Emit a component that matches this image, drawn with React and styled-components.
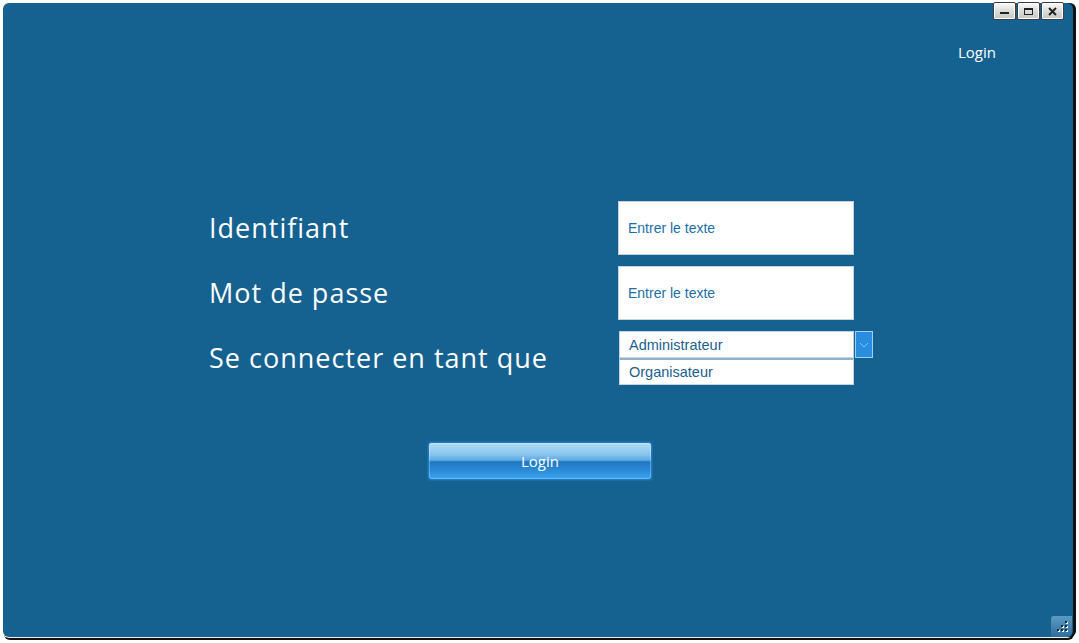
import React from 'react'
import styled, { createGlobalStyle } from 'styled-components'

const Global = createGlobalStyle`
  html, body {
    margin: 0;
    background: #ffffff;
    font-family: "Open Sans", "Noto Sans", sans-serif;
  }
`

const Page = styled.div`
  width: 1079px;
  height: 643px;
  padding: 3px 0 0 3px;
  box-sizing: border-box;
`

const Window = styled.section`
  position: relative;
  width: 1070px;
  height: 634px;
  background: #156190;
  border-radius: 6px;
  box-shadow: 3px 0 0 #111, 0 1px 0 #f2f2f2, 1px 3px 0 #111;
  display: flex;
  flex-direction: column;
  box-sizing: border-box;
  padding: 39px 77px 0 206px;
`

const Controls = styled.div`
  position: absolute;
  top: -1px;
  right: 9px;
  display: flex;
  gap: 1px;
`

const CtrlButton = styled.button`
  width: 23px;
  height: 18px;
  padding: 0;
  border: 1px solid #3d3d3d;
  border-radius: 2px;
  background: linear-gradient(#fafafa, #d9d9d9 55%, #c6c6c6);
  display: flex;
  align-items: center;
  justify-content: center;
  box-shadow: inset 0 0 0 1px #ffffff;
`

const Header = styled.header`
  display: flex;
  justify-content: flex-end;
`

const HeaderLink = styled.span`
  color: #ffffff;
  font-size: 15px;
  line-height: 20px;
`

const Form = styled.div`
  margin-top: 139px;
  display: grid;
  grid-template-columns: 409px 236px;
  grid-auto-rows: 54px;
  row-gap: 11px;
  align-items: center;
`

const Label = styled.div`
  color: #ffffff;
  font-size: 27px;
  line-height: 34px;
  letter-spacing: 1px;
`

const TextBox = styled.div`
  height: 54px;
  background: #ffffff;
  border: 1px solid #c3d3e0;
  box-sizing: border-box;
  display: flex;
  align-items: center;
  padding-left: 9px;
  color: #1c6ea6;
  font-family: "Liberation Sans", Arial, sans-serif;
  font-size: 14px;
`

const Combo = styled.div`
  position: relative;
  align-self: stretch;
  display: flex;
  flex-direction: column;
  margin-left: 1px;
  width: 235px;
`

const ComboRow = styled.div`
  height: 27px;
  background: #ffffff;
  box-sizing: border-box;
  border: 1px solid #c3d3e0;
  border-top: ${p => (p.$selected ? '1px solid #c3d3e0' : '2px solid #8fb2cc')};
  display: flex;
  align-items: center;
  padding-left: 9px;
  color: #1b5f8e;
  font-family: "Liberation Sans", Arial, sans-serif;
  font-size: 14.5px;
`

const ComboArrow = styled.div`
  position: absolute;
  top: 0;
  left: 236px;
  width: 18px;
  height: 27px;
  box-sizing: border-box;
  border: 1px solid #9fd0f5;
  background: #2a8ee0;
  display: flex;
  align-items: center;
  justify-content: center;
`

const ButtonRow = styled.div`
  margin-top: 57px;
  display: flex;
  padding-left: 219px;
`

const LoginButton = styled.button`
  width: 224px;
  height: 38px;
  border-radius: 3px;
  border: 1px solid #1c7ac0;
  box-shadow: 0 0 0 1px #1d6ea8, inset 0 0 0 1px rgba(255, 255, 255, 0.25);
  background: linear-gradient(
    #b3dbf7 0%,
    #8cc6f0 30%,
    #5aa9e5 48%,
    #1f78c0 52%,
    #2a8ad6 75%,
    #3aa3f0 100%
  );
  color: #ffffff;
  font-family: "Open Sans", "Noto Sans", sans-serif;
  font-size: 15px;
  padding: 0;
`

const Grip = styled.div`
  position: absolute;
  right: 1px;
  bottom: 0;
  width: 21px;
  height: 21px;
  border-radius: 3px 0 5px 0;
  background: linear-gradient(#5b9ac6, #2f6e9c);
`

const MinIcon = () => (
  <svg width="11" height="8" viewBox="0 0 11 8">
    <rect x="1" y="5" width="9" height="2" fill="#222" />
  </svg>
)

const MaxIcon = () => (
  <svg width="11" height="9" viewBox="0 0 11 9">
    <rect x="1.5" y="1.5" width="8" height="6" fill="none" stroke="#222" strokeWidth="1" />
    <rect x="1" y="1" width="9" height="2" fill="#222" />
  </svg>
)

const CloseIcon = () => (
  <svg width="11" height="9" viewBox="0 0 11 9">
    <path d="M2 1 L9 8 M9 1 L2 8" stroke="#222" strokeWidth="2" />
  </svg>
)

const GripDots = () => (
  <svg width="21" height="21" viewBox="0 0 21 21">
    {[
      [14, 5],
      [10, 9],
      [14, 9],
      [6, 13],
      [10, 13],
      [14, 13],
    ].map(([x, y]) => (
      <g key={x + '-' + y}>
        <rect x={x + 1} y={y + 1} width="2" height="2" fill="#ffffff" />
        <rect x={x} y={y} width="2" height="2" fill="#0f2f48" />
      </g>
    ))}
  </svg>
)

export default function App() {
  return (
    <Page>
      <Global />
      <Window>
        <Controls>
          <CtrlButton><MinIcon /></CtrlButton>
          <CtrlButton><MaxIcon /></CtrlButton>
          <CtrlButton><CloseIcon /></CtrlButton>
        </Controls>
        <Header>
          <HeaderLink>Login</HeaderLink>
        </Header>
        <Form>
          <Label>Identifiant</Label>
          <TextBox>Entrer le texte</TextBox>
          <Label>Mot de passe</Label>
          <TextBox>Entrer le texte</TextBox>
          <Label>Se connecter en tant que</Label>
          <Combo>
            <ComboRow $selected>Administrateur</ComboRow>
            <ComboRow>Organisateur</ComboRow>
            <ComboArrow>
              <svg width="10" height="6" viewBox="0 0 10 6">
                <path d="M1 1 L5 5 L9 1" fill="none" stroke="#8fc4ee" strokeWidth="1" />
              </svg>
            </ComboArrow>
          </Combo>
        </Form>
        <ButtonRow>
          <LoginButton>Login</LoginButton>
        </ButtonRow>
        <Grip><GripDots /></Grip>
      </Window>
    </Page>
  )
}
